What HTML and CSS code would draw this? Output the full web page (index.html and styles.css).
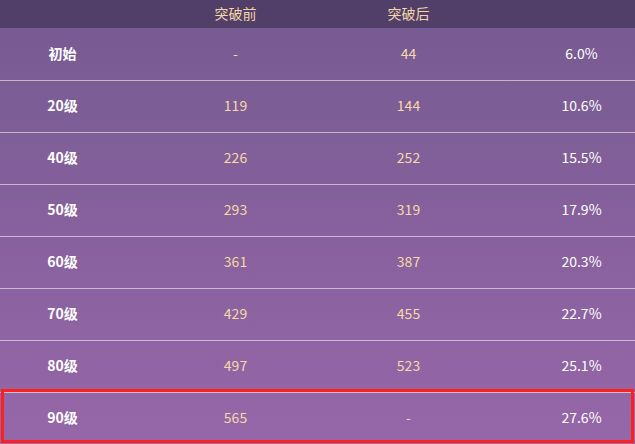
FILE: index.html
```html
<!DOCTYPE html>
<html>
<head>
<meta charset="UTF-8">
<title>突破属性</title>
<link rel="stylesheet" href="styles.css">
</head>
<body>
<div class="wrap">
  <div class="table">
    <div class="row head">
      <span></span><span>突破前</span><span>突破后</span><span></span>
    </div>
    <div class="body">
      <div class="row"><span class="lv">初始</span><span class="val">-</span><span class="val">44</span><span class="pct">6.0%</span></div>
      <div class="row"><span class="lv">20级</span><span class="val">119</span><span class="val">144</span><span class="pct">10.6%</span></div>
      <div class="row"><span class="lv">40级</span><span class="val">226</span><span class="val">252</span><span class="pct">15.5%</span></div>
      <div class="row"><span class="lv">50级</span><span class="val">293</span><span class="val">319</span><span class="pct">17.9%</span></div>
      <div class="row"><span class="lv">60级</span><span class="val">361</span><span class="val">387</span><span class="pct">20.3%</span></div>
      <div class="row"><span class="lv">70级</span><span class="val">429</span><span class="val">455</span><span class="pct">22.7%</span></div>
      <div class="row"><span class="lv">80级</span><span class="val">497</span><span class="val">523</span><span class="pct">25.1%</span></div>
      <div class="row"><span class="lv">90级</span><span class="val">565</span><span class="val">-</span><span class="pct">27.6%</span></div>
    </div>
  </div>
  <div class="mark"></div>
</div>
</body>
</html>
```

FILE: styles.css
```css
body {
  margin: 0;
  font-family: "Microsoft YaHei", "Noto Sans CJK SC", sans-serif;
  font-size: 14px;
  background: #ffffff;
}
.wrap {
  position: relative;
  width: 635px;
  height: 444px;
  overflow: hidden;
}
.table {
  width: 692px;
  margin-left: -24px;
}
.row {
  display: grid;
  grid-template-columns: repeat(4, 1fr);
  align-items: center;
  text-align: center;
  height: 52px;
  padding-bottom: 3px;
  box-sizing: border-box;
}
.head {
  height: 28px;
  background: #523f69;
  color: #f3d8a6;
}
.body {
  background: linear-gradient(#785b92, #9667a8);
}
.body .row + .row {
  border-top: 1px solid rgba(255, 255, 255, 0.55);
}
.lv {
  color: #ffffff;
  font-weight: bold;
}
.val {
  color: #f5d9a8;
}
.pct {
  color: #ffffff;
}
.mark {
  position: absolute;
  left: 1px;
  top: 389px;
  width: 633px;
  height: 54px;
  box-sizing: border-box;
  border: 3px solid #ff1f1f;
}
```
